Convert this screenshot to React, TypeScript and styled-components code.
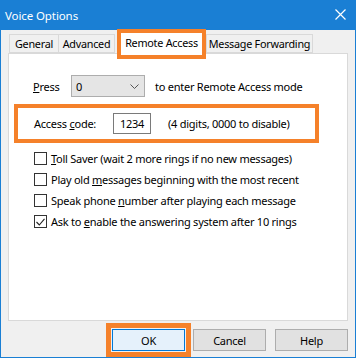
import styled, { createGlobalStyle } from 'styled-components';

const GlobalStyle = createGlobalStyle`
    html, body {
        margin: 0;
        padding: 0;
        background: #f0f0f0;
    }
    body {
        font-family: "Noto Sans", "Open Sans", "Liberation Sans", sans-serif;
        font-size: 11px;
        letter-spacing: -0.25px;
        color: #000;
    }
`;

const accent = '#1a7fd4';
const orange = '#f5812a';

const Window = styled.div`
    width: 356px;
    height: 358px;
    box-sizing: border-box;
    border: 1px solid ${accent};
    border-top: none;
    background: #f0f0f0;
    display: flex;
    flex-direction: column;
    overflow: hidden;
`;

const TitleBar = styled.div`
    height: 30px;
    flex-shrink: 0;
    background: ${accent};
    color: #fff;
    display: flex;
    align-items: center;
    justify-content: space-between;
    padding: 0 9px 0 4px;
    font-size: 11.5px;
    letter-spacing: -0.1px;
    .close {
        width: 11px;
        height: 11px;
        display: block;
        margin-top: -2px;
    }
`;

const Body = styled.div`
    flex: 1;
    display: flex;
    flex-direction: column;
    padding: 0 7px 0 7px;
`;

const TabStrip = styled.div`
    display: flex;
    align-items: flex-end;
    height: 23px;
`;

const Tab = styled.div<{ $active?: boolean; $w: number; $gap: number }>`
    box-sizing: border-box;
    width: ${p => p.$w}px;
    height: ${p => (p.$active ? '22px' : '19px')};
    margin-left: ${p => p.$gap}px;
    margin-bottom: ${p => (p.$active ? '-2px' : '0')};
    background: ${p => (p.$active ? '#fff' : '#f0f0f0')};
    border: ${p => (p.$active ? 'none' : '1px solid #d9d9d9')};
    outline: ${p => (p.$active ? `4px solid ${orange}` : 'none')};
    position: relative;
    z-index: ${p => (p.$active ? 2 : 1)};
    display: flex;
    align-items: center;
    justify-content: center;
    padding-bottom: ${p => (p.$active ? '3px' : '0')};
    font-size: 10.8px;
    white-space: nowrap;
`;

const Panel = styled.div`
    box-sizing: border-box;
    height: 268px;
    background: #fff;
    border: 1px solid #d9d9d9;
    padding: 21px 0 0 5px;
    display: flex;
    flex-direction: column;
    position: relative;
    z-index: 1;
`;

const PressRow = styled.div`
    display: flex;
    align-items: center;
    padding-left: 19px;
    height: 22px;
    .lbl {
        width: 38px;
    }
    .after {
        margin-left: 10px;
    }
`;

const Combo = styled.div`
    box-sizing: border-box;
    width: 74px;
    height: 22px;
    background: #e5e5e5;
    border: 1px solid #adadad;
    display: flex;
    align-items: center;
    justify-content: space-between;
    padding: 0 5px 0 4px;
    svg {
        width: 9px;
        height: 5px;
    }
`;

const Highlight = styled.div`
    box-sizing: border-box;
    margin-top: 7px;
    width: 305px;
    height: 39px;
    border: 4px solid ${orange};
    display: flex;
    align-items: center;
    padding-left: 16px;
    .lbl {
        width: 79px;
    }
    .after {
        margin-left: 17px;
    }
`;

const CodeInput = styled.div`
    box-sizing: border-box;
    width: 38px;
    height: 21px;
    border: 1px solid #7a7a7a;
    display: flex;
    align-items: center;
    justify-content: center;
    background: #fff;
`;

const CheckList = styled.div`
    display: flex;
    flex-direction: column;
    padding: 9px 0 0 20px;
    gap: 8px;
`;

const CheckRow = styled.label`
    display: flex;
    align-items: center;
    height: 13px;
    gap: 4px;
    white-space: nowrap;
`;

const Box = styled.span`
    box-sizing: border-box;
    width: 13px;
    height: 13px;
    border: 1px solid #333;
    background: #fff;
    display: flex;
    align-items: center;
    justify-content: center;
    svg {
        width: 9px;
        height: 8px;
    }
`;

const ButtonBar = styled.div`
    display: flex;
    justify-content: flex-end;
    gap: 8px;
    padding-top: 8px;
`;

const Button = styled.div<{ $primary?: boolean }>`
    box-sizing: border-box;
    width: 73px;
    height: 22px;
    background: ${p => (p.$primary ? '#e5f1fb' : '#e1e1e1')};
    border: 1px solid ${p => (p.$primary ? '#0078d7' : '#adadad')};
    outline: ${p => (p.$primary ? `5px solid ${orange}` : 'none')};
    outline-offset: 1px;
    display: flex;
    align-items: center;
    justify-content: center;
    &:last-child {
        margin-left: 1px;
    }
`;

function Check({ checked }: { checked?: boolean }) {
  return (
    <Box>
      {checked && (
        <svg viewBox="0 0 9 8">
          <path d="M0.5 4 L3.3 7 L8.5 0.8" fill="none" stroke="#222" strokeWidth="1.1" />
        </svg>
      )}
    </Box>
  );
}

export default function App() {
  return (
    <>
      <GlobalStyle />
      <Window>
        <TitleBar>
          <span>Voice Options</span>
          <svg className="close" viewBox="0 0 11 11">
            <path d="M0.5 0.5 L10.5 10.5 M10.5 0.5 L0.5 10.5" stroke="#fff" strokeWidth="1.2" />
          </svg>
        </TitleBar>
        <Body>
          <TabStrip>
            <Tab $w={50} $gap={1}>General</Tab>
            <Tab $w={57} $gap={-1}>Advanced</Tab>
            <Tab $active $w={81} $gap={6}>Remote Access</Tab>
            <Tab $w={107} $gap={4}>Message Forwarding</Tab>
          </TabStrip>
          <Panel>
            <PressRow>
              <span className="lbl"><u>P</u>ress</span>
              <Combo>
                <span>0</span>
                <svg viewBox="0 0 9 5">
                  <path d="M0.5 0.5 L4.5 4.5 L8.5 0.5" fill="none" stroke="#555" strokeWidth="1" />
                </svg>
              </Combo>
              <span className="after">to enter Remote Access mode</span>
            </PressRow>
            <Highlight>
              <span className="lbl">Access <u>c</u>ode:</span>
              <CodeInput>1234</CodeInput>
              <span className="after">(4 digits, 0000 to disable)</span>
            </Highlight>
            <CheckList>
              <CheckRow><Check /><span><u>T</u>oll Saver (wait 2 more rings if no new messages)</span></CheckRow>
              <CheckRow><Check /><span>Play old <u>m</u>essages beginning with the most recent</span></CheckRow>
              <CheckRow><Check /><span>Speak phone <u>n</u>umber after playing each message</span></CheckRow>
              <CheckRow><Check checked /><span>Ask to <u>e</u>nable the answering system after 10 rings</span></CheckRow>
            </CheckList>
          </Panel>
          <ButtonBar>
            <Button $primary>OK</Button>
            <Button>Cancel</Button>
            <Button>Help</Button>
          </ButtonBar>
        </Body>
      </Window>
    </>
  );
}
